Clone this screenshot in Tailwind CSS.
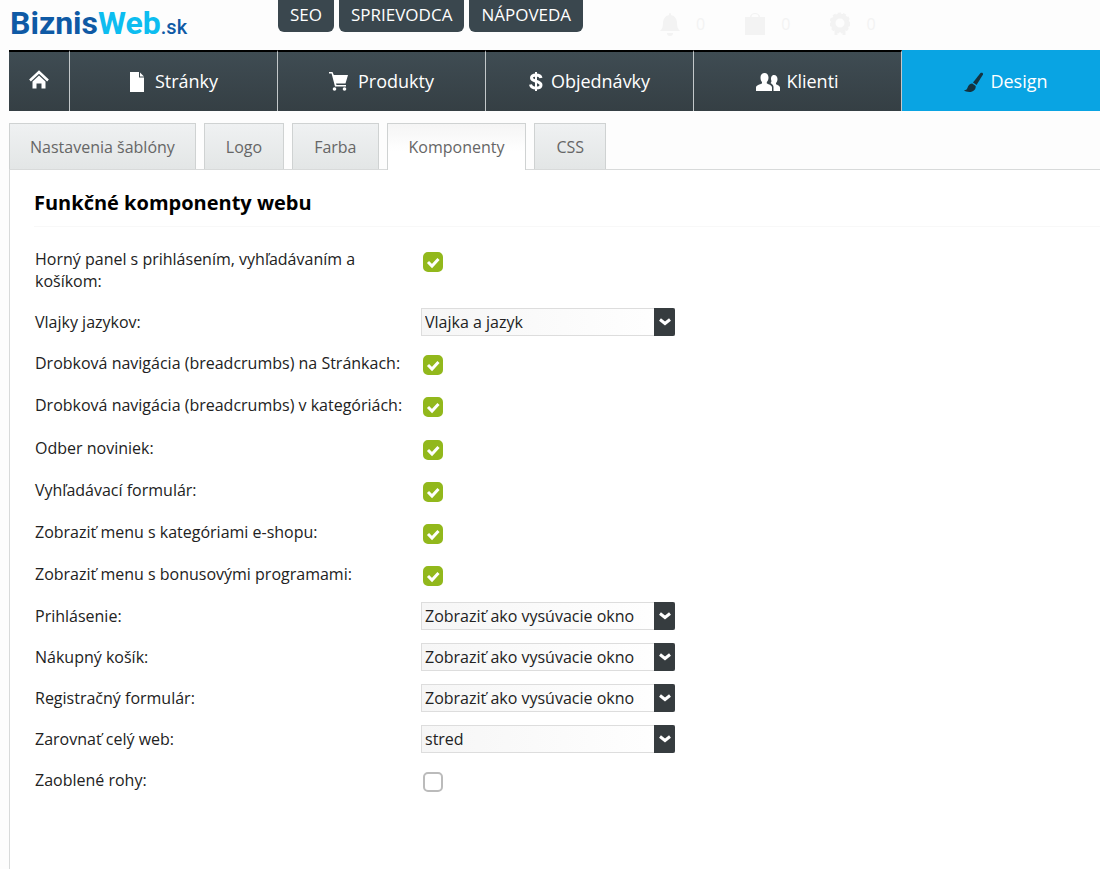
<!DOCTYPE html>
<html lang="sk">
<head>
<meta charset="utf-8">
<meta name="viewport" content="width=device-width, initial-scale=1">
<title>BiznisWeb.sk – Komponenty</title>
<script src="https://cdn.jsdelivr.net/npm/@tailwindcss/browser@4"></script>
</head>
<body class="flex min-h-screen flex-col overflow-x-hidden bg-[#fdfdfd] pl-[9px] font-['Open_Sans',sans-serif] text-[16px] text-[#222]">

<header class="flex h-[50px] shrink-0 items-start">
  <a href="#" class="flex w-[269px] shrink-0 items-baseline pt-1 pl-px font-['Roboto',sans-serif] text-[32px] leading-[38px] font-bold text-[#0f5aa5]"><span>Biznis</span><span class="text-[#0dbdf0]">Web</span><span class="text-[20px] font-medium">.sk</span></a>
  <div class="flex gap-[5px] text-[17px] text-white">
    <a href="#" class="rounded-b-md bg-[#3a474e] px-3 pb-[2px] leading-[30px]">SEO</a>
    <a href="#" class="rounded-b-md bg-[#3a474e] px-3 pb-[2px] leading-[30px]">SPRIEVODCA</a>
    <a href="#" class="rounded-b-md bg-[#3a474e] px-3 pb-[2px] leading-[30px]">NÁPOVEDA</a>
  </div>
  <div class="ml-[77px] flex gap-10 pt-[10px] text-[16px] leading-[28px] text-[#f3f3f3]">
    <span class="flex items-center gap-4"><svg class="h-6 w-5" viewBox="0 0 20 24" fill="currentColor"><path d="M10 1c1 0 1 1 1 2 4 1 6 4 6 8 0 4 1 6 3 8H0c2-2 3-4 3-8 0-4 2-7 6-8 0-1 0-2 1-2zM7 21h6a3 3 0 0 1-6 0z"/></svg>0</span>
    <span class="flex items-center gap-4"><svg class="h-6 w-5" viewBox="0 0 20 24" fill="currentColor"><path d="M0 5h20v18H0zM5 5a5 4 0 0 1 10 0h-1.500a3.500 3 0 0 0-7 0z"/></svg>0</span>
    <span class="flex items-center gap-4"><svg class="h-6 w-5" viewBox="0 0 20 24" fill="none" stroke="currentColor"><circle cx="10" cy="11" r="7" stroke-width="5"/><circle cx="10" cy="11" r="9" stroke-width="3" stroke-dasharray="3 2"/><path d="M6 19v4M14 19v4" stroke-width="3"/></svg>0</span>
  </div>
</header>

<nav class="flex h-[61px] shrink-0 text-[18px] text-white">
  <a href="#" aria-label="Domov" class="flex w-[61px] shrink-0 items-center justify-center border-t-2 border-r border-t-black border-r-[#c3c8ca] bg-linear-to-b from-[#3f4c53] to-[#353f44] pb-1">
    <svg class="h-[19px] w-5" viewBox="0 0 20 19"><path d="M1 10.500 10 2l9 8.500" fill="none" stroke="#fff" stroke-width="2.500"/><path d="M3.500 11.500 10 5.500l6.500 6V18.500h-4v-5h-5v5h-4z" fill="#fff"/></svg>
  </a>
  <a href="#" class="flex w-[208px] shrink-0 items-center justify-center gap-[10px] border-t-2 border-r border-t-black border-r-[#c3c8ca] bg-linear-to-b from-[#3f4c53] to-[#353f44]">
    <svg class="h-5 w-4" viewBox="0 0 16 20" fill="#fff"><path d="M1 0h9v5.500h5V20H1z"/><path d="M11 .5l4 4h-4z"/></svg>Stránky</a>
  <a href="#" class="flex w-[208px] shrink-0 items-center justify-center gap-[10px] border-t-2 border-r border-t-black border-r-[#c3c8ca] bg-linear-to-b from-[#3f4c53] to-[#353f44]">
    <svg class="h-[19px] w-[19px]" viewBox="0 0 19 19" fill="#fff"><path d="M0 0h3.500l1.300 3H19l-2.500 8.500H7l.5 1.500H17v1.500H6L2.600 1.500H0z"/><circle cx="5.500" cy="17" r="1.800"/><circle cx="15.500" cy="17" r="1.800"/></svg>Produkty</a>
  <a href="#" class="flex w-[208px] shrink-0 items-center justify-center gap-2 border-t-2 border-r border-t-black border-r-[#c3c8ca] bg-linear-to-b from-[#3f4c53] to-[#353f44]">
    <svg class="h-[19px] w-[14px]" viewBox="0 0 14 19" fill="none" stroke="#fff"><path d="M12 6C11.500 3.500 9.500 3 7 3 4.500 3 2.500 4 2.500 6c0 4 9.500 2.500 9.500 7 0 2-2 3-5 3-2.500 0-5-1-5.500-3.500" stroke-width="3"/><path d="M7 0v19" stroke-width="2"/></svg>Objednávky</a>
  <a href="#" class="flex w-[208px] shrink-0 items-center justify-center gap-[6px] border-t-2 border-r border-t-black border-r-[#c3c8ca] bg-linear-to-b from-[#3f4c53] to-[#353f44]">
    <svg class="h-[18px] w-6" viewBox="0 0 24 18" fill="#fff"><path d="M8.500 0c2.500 0 4 2 4 4.500 0 2-.8 3.500-1.700 4.500v1.500c2 1 5.200 1.500 5.200 4V18H0v-3.500c0-2.500 4-3 6-4V9C5 8 4.500 6.500 4.500 4.500 4.500 2 6 0 8.500 0z"/><path d="M18 2c2.200 0 3.500 1.700 3.500 4 0 1.700-.6 3-1.500 4v1.200c1.500.8 4 1.300 4 3.500V18h-6.500v-4c0-2-1.500-3-3-4 1-.7 1-1.500.8-2.500C14.500 4.500 15.500 2 18 2z"/></svg>Klienti</a>
  <a href="#" class="flex w-[208px] shrink-0 items-center justify-center gap-[6px] bg-[#09a4e3] pt-[2px]">
    <svg class="h-5 w-5" viewBox="0 0 20 20" fill="#14323f"><path d="M16.500 1c1-.8 3-.3 2.500 1.500L12.500 13 9 10.500z"/><path d="M8.300 11.500l3.400 2.500c.3 3.500-2.500 6-6.200 6-2.500 0-4.500-.7-5.500-1.700 2.500 0 3-1 3.700-3 .8-2.300 2.500-3.800 4.600-3.800z"/></svg>Design</a>
</nav>

<div class="mt-3 flex h-[47px] shrink-0 items-end gap-2 border-b border-[#d8dada] text-[16px] text-[#666]">
  <a href="#" class="h-full border border-b-0 border-[#cfd2d2] bg-linear-to-b from-[#eff1f2] to-[#e3e6e6] px-5 leading-[46px]">Nastavenia šablóny</a>
  <a href="#" class="h-full border border-b-0 border-[#cfd2d2] bg-linear-to-b from-[#eff1f2] to-[#e3e6e6] px-[21px] leading-[46px]">Logo</a>
  <a href="#" class="h-full border border-b-0 border-[#cfd2d2] bg-linear-to-b from-[#eff1f2] to-[#e3e6e6] px-[21px] leading-[46px]">Farba</a>
  <a href="#" aria-current="page" class="-mb-px h-[47px] border border-b-0 border-[#cfd2d2] bg-linear-to-b from-[#f5f5f5] to-white to-60% px-[21px] leading-[46px]">Komponenty</a>
  <a href="#" class="h-full border border-b-0 border-[#cfd2d2] bg-linear-to-b from-[#eff1f2] to-[#e3e6e6] px-[21px] leading-[46px]">CSS</a>
</div>

<main class="grow border-l border-[#d8dada] bg-white pl-6">
  <h1 class="border-b border-[#f8f8f8] pt-4 pb-[6px] text-[20px] leading-[34px] font-bold text-black">Funkčné komponenty webu</h1>
  <form class="flex flex-col pt-[21px] pl-px leading-[22px]">
    <div class="flex h-[53px] items-start"><label for="f1" class="w-[386px] shrink-0 pr-8">Horný panel s prihlásením, vyhľadávaním a košíkom:</label><span class="relative ml-[2px] mt-1 size-5"><input id="f1" type="checkbox" checked class="peer block size-5 appearance-none rounded-[5px] border-2 border-[#bbb] bg-white checked:border-[#92b81c] checked:bg-[#92b81c]"><svg class="pointer-events-none absolute inset-0 hidden size-5 peer-checked:block" viewBox="0 0 20 20" fill="none" stroke="#fff" stroke-width="3"><path d="M5 10l4 4L15.500 7"/></svg></span></div>
    <div class="flex h-[41px] items-center"><label for="f2" class="w-[386px] shrink-0">Vlajky jazykov:</label><span class="relative w-[254px]"><select id="f2" class="block h-7 w-full appearance-none border border-[#ddd] bg-linear-to-r from-[#f6f6f6] to-white pl-[3px] text-[16px]"><option>Vlajka a jazyk</option></select><span class="pointer-events-none absolute inset-y-0 right-0 flex w-[21px] items-center justify-center rounded-r-xs bg-[#363c3f]"><svg class="h-2 w-3" viewBox="0 0 12 8" fill="none" stroke="#fff" stroke-width="3"><path d="M1 1.500l5 4 5-4"/></svg></span></span></div>
    <div class="flex h-[42px] items-center"><label for="f3" class="w-[386px] shrink-0">Drobková navigácia (breadcrumbs) na Stránkach:</label><span class="relative ml-[2px] mt-1 size-5"><input id="f3" type="checkbox" checked class="peer block size-5 appearance-none rounded-[5px] border-2 border-[#bbb] bg-white checked:border-[#92b81c] checked:bg-[#92b81c]"><svg class="pointer-events-none absolute inset-0 hidden size-5 peer-checked:block" viewBox="0 0 20 20" fill="none" stroke="#fff" stroke-width="3"><path d="M5 10l4 4L15.500 7"/></svg></span></div>
    <div class="flex h-[42px] items-center"><label for="f4" class="w-[386px] shrink-0">Drobková navigácia (breadcrumbs) v kategóriách:</label><span class="relative ml-[2px] mt-1 size-5"><input id="f4" type="checkbox" checked class="peer block size-5 appearance-none rounded-[5px] border-2 border-[#bbb] bg-white checked:border-[#92b81c] checked:bg-[#92b81c]"><svg class="pointer-events-none absolute inset-0 hidden size-5 peer-checked:block" viewBox="0 0 20 20" fill="none" stroke="#fff" stroke-width="3"><path d="M5 10l4 4L15.500 7"/></svg></span></div>
    <div class="flex h-[43px] items-center"><label for="f5" class="w-[386px] shrink-0">Odber noviniek:</label><span class="relative ml-[2px] mt-1 size-5"><input id="f5" type="checkbox" checked class="peer block size-5 appearance-none rounded-[5px] border-2 border-[#bbb] bg-white checked:border-[#92b81c] checked:bg-[#92b81c]"><svg class="pointer-events-none absolute inset-0 hidden size-5 peer-checked:block" viewBox="0 0 20 20" fill="none" stroke="#fff" stroke-width="3"><path d="M5 10l4 4L15.500 7"/></svg></span></div>
    <div class="flex h-[42px] items-center"><label for="f6" class="w-[386px] shrink-0">Vyhľadávací formulár:</label><span class="relative ml-[2px] mt-1 size-5"><input id="f6" type="checkbox" checked class="peer block size-5 appearance-none rounded-[5px] border-2 border-[#bbb] bg-white checked:border-[#92b81c] checked:bg-[#92b81c]"><svg class="pointer-events-none absolute inset-0 hidden size-5 peer-checked:block" viewBox="0 0 20 20" fill="none" stroke="#fff" stroke-width="3"><path d="M5 10l4 4L15.500 7"/></svg></span></div>
    <div class="flex h-[42px] items-center"><label for="f7" class="w-[386px] shrink-0">Zobraziť menu s kategóriami e-shopu:</label><span class="relative ml-[2px] mt-1 size-5"><input id="f7" type="checkbox" checked class="peer block size-5 appearance-none rounded-[5px] border-2 border-[#bbb] bg-white checked:border-[#92b81c] checked:bg-[#92b81c]"><svg class="pointer-events-none absolute inset-0 hidden size-5 peer-checked:block" viewBox="0 0 20 20" fill="none" stroke="#fff" stroke-width="3"><path d="M5 10l4 4L15.500 7"/></svg></span></div>
    <div class="flex h-[42px] items-center"><label for="f8" class="w-[386px] shrink-0">Zobraziť menu s bonusovými programami:</label><span class="relative ml-[2px] mt-1 size-5"><input id="f8" type="checkbox" checked class="peer block size-5 appearance-none rounded-[5px] border-2 border-[#bbb] bg-white checked:border-[#92b81c] checked:bg-[#92b81c]"><svg class="pointer-events-none absolute inset-0 hidden size-5 peer-checked:block" viewBox="0 0 20 20" fill="none" stroke="#fff" stroke-width="3"><path d="M5 10l4 4L15.500 7"/></svg></span></div>
    <div class="flex h-[41px] items-center"><label for="f9" class="w-[386px] shrink-0">Prihlásenie:</label><span class="relative w-[254px]"><select id="f9" class="block h-7 w-full appearance-none border border-[#ddd] bg-linear-to-r from-[#f6f6f6] to-white pl-[3px] text-[16px]"><option>Zobraziť ako vysúvacie okno</option></select><span class="pointer-events-none absolute inset-y-0 right-0 flex w-[21px] items-center justify-center rounded-r-xs bg-[#363c3f]"><svg class="h-2 w-3" viewBox="0 0 12 8" fill="none" stroke="#fff" stroke-width="3"><path d="M1 1.500l5 4 5-4"/></svg></span></span></div>
    <div class="flex h-[41px] items-center"><label for="f10" class="w-[386px] shrink-0">Nákupný košík:</label><span class="relative w-[254px]"><select id="f10" class="block h-7 w-full appearance-none border border-[#ddd] bg-linear-to-r from-[#f6f6f6] to-white pl-[3px] text-[16px]"><option>Zobraziť ako vysúvacie okno</option></select><span class="pointer-events-none absolute inset-y-0 right-0 flex w-[21px] items-center justify-center rounded-r-xs bg-[#363c3f]"><svg class="h-2 w-3" viewBox="0 0 12 8" fill="none" stroke="#fff" stroke-width="3"><path d="M1 1.500l5 4 5-4"/></svg></span></span></div>
    <div class="flex h-[41px] items-center"><label for="f11" class="w-[386px] shrink-0">Registračný formulár:</label><span class="relative w-[254px]"><select id="f11" class="block h-7 w-full appearance-none border border-[#ddd] bg-linear-to-r from-[#f6f6f6] to-white pl-[3px] text-[16px]"><option>Zobraziť ako vysúvacie okno</option></select><span class="pointer-events-none absolute inset-y-0 right-0 flex w-[21px] items-center justify-center rounded-r-xs bg-[#363c3f]"><svg class="h-2 w-3" viewBox="0 0 12 8" fill="none" stroke="#fff" stroke-width="3"><path d="M1 1.500l5 4 5-4"/></svg></span></span></div>
    <div class="flex h-[41px] items-center"><label for="f12" class="w-[386px] shrink-0">Zarovnať celý web:</label><span class="relative w-[254px]"><select id="f12" class="block h-7 w-full appearance-none border border-[#ddd] bg-linear-to-r from-[#f6f6f6] to-white pl-[3px] text-[16px]"><option>stred</option></select><span class="pointer-events-none absolute inset-y-0 right-0 flex w-[21px] items-center justify-center rounded-r-xs bg-[#363c3f]"><svg class="h-2 w-3" viewBox="0 0 12 8" fill="none" stroke="#fff" stroke-width="3"><path d="M1 1.500l5 4 5-4"/></svg></span></span></div>
    <div class="flex h-[42px] items-center"><label for="f13" class="w-[386px] shrink-0">Zaoblené rohy:</label><span class="relative ml-[2px] mt-1 size-5"><input id="f13" type="checkbox" class="peer block size-5 appearance-none rounded-[5px] border-2 border-[#bbb] bg-white checked:border-[#92b81c] checked:bg-[#92b81c]"><svg class="pointer-events-none absolute inset-0 hidden size-5 peer-checked:block" viewBox="0 0 20 20" fill="none" stroke="#fff" stroke-width="3"><path d="M5 10l4 4L15.500 7"/></svg></span></div>
  </form>
</main>
</body>
</html>
